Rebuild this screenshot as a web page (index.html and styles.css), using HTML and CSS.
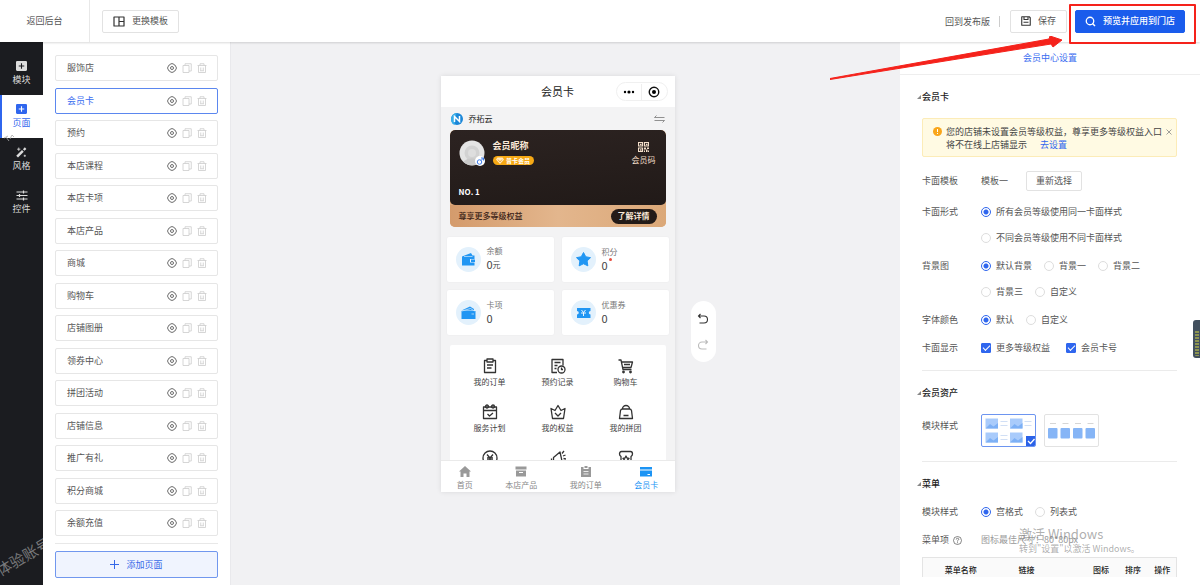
FILE: index.html
```html
<!DOCTYPE html>
<html lang="zh-CN">
<head>
<meta charset="utf-8">
<meta name="viewport" content="width=device-width, initial-scale=1">
<title>会员卡</title>
<link rel="stylesheet" href="styles.css">
</head>
<body>
<svg class="defs" aria-hidden="true">
  <symbol id="gear" viewBox="0 0 20 20"><path d="M7.4 1.5h5.2l1.2 2 2.6 1L19 10l-2.600 5.500-2.600 1-1.200 2H7.400l-1.200-2-2.600-1L1 10l2.600-5.500 2.600-1z" fill="none" stroke="currentColor" stroke-width="1.700" stroke-linejoin="round"/><circle cx="10" cy="10" r="3" fill="none" stroke="currentColor" stroke-width="1.700"/></symbol>
  <symbol id="copy" viewBox="0 0 20 20"><path d="M2 5h12v14H2zM6 5V1.500h12.500V16H14" fill="none" stroke="currentColor" stroke-width="1.600"/></symbol>
  <symbol id="trash" viewBox="0 0 20 20"><path d="M1 5h18M6 5V1.500h8V5M3 5v14h14V5M7.500 9v6M12.500 9v6M6 15.500h8" fill="none" stroke="currentColor" stroke-width="1.600"/></symbol>
  <symbol id="plusbox" viewBox="0 0 20 20"><path fill="currentColor" fill-rule="evenodd" d="M2 0h16a2 2 0 0 1 2 2v14a2 2 0 0 1-2 2H2a2 2 0 0 1-2-2V2a2 2 0 0 1 2-2zm7 4v4H5v2h4v4h2v-4h4V8h-4V4z"/></symbol>
</svg>
<header class="topbar">
  <a class="back" href="#">返回后台</a>
  <button class="btn swap"><svg width="12" height="11" viewBox="0 0 24 22"><path d="M2 2h20v18H2zM12 2v18M12 11h10" fill="none" stroke="#333" stroke-width="2.400" stroke-linejoin="round"/></svg>更换模板</button>
  <div class="actions">
    <a class="release" href="#">回到发布版</a>
    <button class="btn save"><svg width="10" height="10" viewBox="0 0 20 20"><path d="M1.500 1.500h15l2 2v15h-17zM6 2v5h8V2M5 12.500h10" fill="none" stroke="#333" stroke-width="2.200" stroke-linejoin="round"/></svg>保存</button>
    <button class="btn primary"><svg width="11" height="11" viewBox="0 0 22 22"><circle cx="10" cy="10" r="7.500" fill="none" stroke="#fff" stroke-width="2.600"/><path d="M15 15l5 5" stroke="#fff" stroke-width="3"/></svg>预览并应用到门店</button>
  </div>
</header>
<div class="workspace">
  <nav class="rail">
    <a href="#"><svg width="11" height="11"><use href="#plusbox"/></svg>模块</a>
    <a href="#" class="active"><svg width="11" height="11"><use href="#plusbox"/></svg>页面</a>
    <a href="#"><svg width="11" height="11" viewBox="0 0 20 20"><path d="M2 17.500L12.500 7" stroke="#ddd" stroke-width="4.500"/><path d="M14 5.500l3.500-3.500" stroke="#ddd" stroke-width="4"/><path d="M5 1v6M2 4h6M16 14v4M14 16h4" stroke="#ddd" stroke-width="1.500"/></svg>风格</a>
    <a href="#"><svg width="12" height="11" viewBox="0 0 24 20"><path d="M1 3h22M1 10h22M1 17h22M15 0v6M7 7v6M15 14v6" fill="none" stroke="#ddd" stroke-width="2.400"/></svg>控件</a>
  </nav>
  <aside class="pages">
    <ul class="page-list">
      <li><span>服饰店</span><button aria-label="设置"><svg><use href="#gear"/></svg></button><button class="dim" aria-label="复制"><svg><use href="#copy"/></svg></button><button class="dim" aria-label="删除"><svg><use href="#trash"/></svg></button></li>
      <li class="active"><span>会员卡</span><button aria-label="设置"><svg><use href="#gear"/></svg></button><button class="dim" aria-label="复制"><svg><use href="#copy"/></svg></button><button class="dim" aria-label="删除"><svg><use href="#trash"/></svg></button></li>
      <li><span>预约</span><button aria-label="设置"><svg><use href="#gear"/></svg></button><button class="dim" aria-label="复制"><svg><use href="#copy"/></svg></button><button class="dim" aria-label="删除"><svg><use href="#trash"/></svg></button></li>
      <li><span>本店课程</span><button aria-label="设置"><svg><use href="#gear"/></svg></button><button class="dim" aria-label="复制"><svg><use href="#copy"/></svg></button><button class="dim" aria-label="删除"><svg><use href="#trash"/></svg></button></li>
      <li><span>本店卡项</span><button aria-label="设置"><svg><use href="#gear"/></svg></button><button class="dim" aria-label="复制"><svg><use href="#copy"/></svg></button><button class="dim" aria-label="删除"><svg><use href="#trash"/></svg></button></li>
      <li><span>本店产品</span><button aria-label="设置"><svg><use href="#gear"/></svg></button><button class="dim" aria-label="复制"><svg><use href="#copy"/></svg></button><button class="dim" aria-label="删除"><svg><use href="#trash"/></svg></button></li>
      <li><span>商城</span><button aria-label="设置"><svg><use href="#gear"/></svg></button><button class="dim" aria-label="复制"><svg><use href="#copy"/></svg></button><button class="dim" aria-label="删除"><svg><use href="#trash"/></svg></button></li>
      <li><span>购物车</span><button aria-label="设置"><svg><use href="#gear"/></svg></button><button class="dim" aria-label="复制"><svg><use href="#copy"/></svg></button><button class="dim" aria-label="删除"><svg><use href="#trash"/></svg></button></li>
      <li><span>店铺图册</span><button aria-label="设置"><svg><use href="#gear"/></svg></button><button class="dim" aria-label="复制"><svg><use href="#copy"/></svg></button><button class="dim" aria-label="删除"><svg><use href="#trash"/></svg></button></li>
      <li><span>领券中心</span><button aria-label="设置"><svg><use href="#gear"/></svg></button><button class="dim" aria-label="复制"><svg><use href="#copy"/></svg></button><button class="dim" aria-label="删除"><svg><use href="#trash"/></svg></button></li>
      <li><span>拼团活动</span><button aria-label="设置"><svg><use href="#gear"/></svg></button><button class="dim" aria-label="复制"><svg><use href="#copy"/></svg></button><button class="dim" aria-label="删除"><svg><use href="#trash"/></svg></button></li>
      <li><span>店铺信息</span><button aria-label="设置"><svg><use href="#gear"/></svg></button><button class="dim" aria-label="复制"><svg><use href="#copy"/></svg></button><button class="dim" aria-label="删除"><svg><use href="#trash"/></svg></button></li>
      <li><span>推广有礼</span><button aria-label="设置"><svg><use href="#gear"/></svg></button><button class="dim" aria-label="复制"><svg><use href="#copy"/></svg></button><button class="dim" aria-label="删除"><svg><use href="#trash"/></svg></button></li>
      <li><span>积分商城</span><button aria-label="设置"><svg><use href="#gear"/></svg></button><button class="dim" aria-label="复制"><svg><use href="#copy"/></svg></button><button class="dim" aria-label="删除"><svg><use href="#trash"/></svg></button></li>
      <li><span>余额充值</span><button aria-label="设置"><svg><use href="#gear"/></svg></button><button class="dim" aria-label="复制"><svg><use href="#copy"/></svg></button><button class="dim" aria-label="删除"><svg><use href="#trash"/></svg></button></li>
    </ul>
    <div class="add-wrap"><button class="add"><svg width="9" height="9" viewBox="0 0 18 18"><path d="M9 0v18M0 9h18" stroke="currentColor" stroke-width="2"/></svg>添加页面</button></div>
  </aside>

  <main class="canvas">
    <section class="phone">
      <div class="phone-title">
        <h1>会员卡</h1>
        <div class="capsule">
          <svg width="12" height="6" viewBox="0 0 24 12"><circle cx="4" cy="6" r="2.400"/><circle cx="12" cy="6" r="3.200"/><circle cx="20" cy="6" r="2.400"/></svg>
          <i></i>
          <svg width="12" height="12" viewBox="0 0 24 24"><circle cx="12" cy="12" r="9.500" fill="none" stroke="#111" stroke-width="2.800"/><circle cx="12" cy="12" r="4"/></svg>
        </div>
      </div>
      <div class="shop">
        <svg width="12" height="12" viewBox="0 0 24 24"><circle cx="12" cy="12" r="12" fill="#1b87d8"/><path d="M1 8a12 12 0 0 1 10-8l-4 24A12 12 0 0 1 1 8z" fill="#39aee8"/><path d="M7 18V7l10 10V6" fill="none" stroke="#fff" stroke-width="3"/></svg>
        <span>乔拓云</span>
        <svg width="11" height="8" viewBox="0 0 22 16"><path d="M5 1L1 5h20M17 15l4-4H1" fill="none" stroke="#777" stroke-width="1.600"/></svg>
      </div>
      <div class="member">
        <div class="member-main">
          <svg class="avatar" width="27" height="27" viewBox="0 0 54 54"><circle cx="26" cy="26" r="25" fill="#e4e4e4"/><circle cx="26" cy="26" r="15" fill="#d2d2d2"/><circle cx="26" cy="26" r="8" fill="#dedede"/><path d="M8 43q18-13 36 0a25 25 0 0 1-36 0z" fill="#c9c9c9"/><circle cx="42" cy="42" r="10" fill="#fff"/><circle cx="41" cy="44" r="4.500" fill="none" stroke="#3b7bea" stroke-width="2"/><path d="M44 41l5-5m-5 0h5v5" fill="none" stroke="#3b7bea" stroke-width="2"/></svg>
          <div class="who"><b>会员昵称</b><span class="level"><svg width="8" height="7" viewBox="0 0 16 14"><path d="M3 1h10l3 4-8 9-8-9z" fill="#ffe9c0"/><path d="M4 5l4 5 4-5" fill="none" stroke="#f39c12" stroke-width="1.600"/></svg>普卡会员</span></div>
          <div class="code"><svg width="11" height="10" viewBox="0 0 22 20"><path d="M1 1h8v7H1zM13 1h8v7h-8zM1 12h8v7H1z" fill="none" stroke="#f3dfca" stroke-width="2.400"/><path d="M4 3.500h3v3H4zM16 3.500h3v3h-3zM4 14.500h3v3H4zM12 11h4v4h-4zM18 11h4v3h-4zM16 15h3v5h-3zM12 17h2v3h-2zM20 17h2v3h-2z" fill="#f3dfca"/></svg>会员码</div>
          <b class="no">NO. 1</b>
        </div>
        <div class="member-more"><span>尊享更多等级权益</span><button>了解详情</button></div>
      </div>
      <div class="assets">
        <div><svg width="25" height="25" viewBox="0 0 50 50"><circle cx="25" cy="25" r="25" fill="#e3f1fc"/><path d="M12 19l18-7 3 5h4v7h-9v7h9v6H12z" fill="#2196f3"/><path d="M30 25h8v5h-8z" fill="#2196f3"/><path d="M16 19h17" stroke="#bfe0fb" stroke-width="1.500"/></svg><p>余额<strong>0<small>元</small></strong></p></div>
        <div><svg width="25" height="25" viewBox="0 0 50 50"><circle cx="25" cy="25" r="25" fill="#e3f1fc"/><path d="M25 11l4.500 8.500 9.500 1.800-6.800 6.700 1.500 9.700-8.700-4.200-8.700 4.200 1.500-9.700L11 21.300l9.500-1.800z" fill="#2196f3" stroke="#2196f3" stroke-width="2" stroke-linejoin="round"/></svg><p>积分<strong>0<em></em></strong></p></div>
        <div><svg width="25" height="25" viewBox="0 0 50 50"><circle cx="25" cy="25" r="25" fill="#e3f1fc"/><path d="M11 21l17-8 8 5v3z" fill="#2196f3"/><path d="M11 22h28v16H11z" fill="#2196f3"/><path d="M12 22l17-5 8 5M31 28h5" fill="none" stroke="#cce7fc" stroke-width="1.500"/></svg><p>卡项<strong>0</strong></p></div>
        <div><svg width="25" height="25" viewBox="0 0 50 50"><circle cx="25" cy="25" r="25" fill="#e3f1fc"/><path d="M12 16h27v6a3 3 0 0 0 0 7v7H12v-7a3 3 0 0 0 0-7z" fill="#2196f3"/><path d="M21 20l4 5 4-5M25 25v7M20 26h10" fill="none" stroke="#fff" stroke-width="1.800"/></svg><p>优惠券<strong>0</strong></p></div>
      </div>
      <div class="menu-clip">
      <div class="menu">
        <a href="#"><svg viewBox="0 0 32 32"><path d="M10 5H5v24h22V5h-5M10 2h12v6H10zM10 14h12M10 20h9"/></svg>我的订单</a>
        <a href="#"><svg viewBox="0 0 32 32"><path d="M14 29H4V3h22v12M9 9h12M9 15h6M9 21h4"/><circle cx="23" cy="23" r="7"/><path d="M23 19v4h3"/></svg>预约记录</a>
        <a href="#"><svg viewBox="0 0 32 32"><path d="M1 4h5l4 19h17M7 8h22l-3 11H10M12 13h12"/><circle cx="11" cy="28" r="1.500"/><circle cx="25" cy="28" r="1.500"/></svg>购物车</a>
        <a href="#"><svg viewBox="0 0 32 32"><path d="M3 6h26v23H3zM3 13h26M11 20l4 4 7-6"/><circle cx="10" cy="5" r="3"/><circle cx="22" cy="5" r="3"/></svg>服务计划</a>
        <a href="#"><svg viewBox="0 0 32 32"><path d="M2 9l8 4 6-10 6 10 8-4-3 20H5zM10 18l6 6 6-6"/></svg>我的权益</a>
        <a href="#"><svg viewBox="0 0 32 32"><path d="M3 29h26l-2-16q-1-3-4-3H9q-3 0-4 3zM9 10a7 7 0 0 1 14 0M11 23h10"/></svg>我的拼团</a>
        <a href="#" aria-label="分销"><svg viewBox="0 0 32 32"><circle cx="16" cy="16" r="14"/><path d="M10 9l6 7 6-7M16 16v9M10 16h12M10 20h12"/></svg></a>
        <a href="#" aria-label="活动"><svg viewBox="0 0 32 32"><path d="M7 15L20 4l4 18-17 1zM3 17v6M10 23l2 6h4M24 7l4-5M26 12l5-2M27 17l5 1"/></svg></a>
        <a href="#" aria-label="门店"><svg viewBox="0 0 32 32"><path d="M7 3h18q4 0 4 5 0 3-3 5v16H6V13q-3-2-3-5 0-5 4-5zM16 12l2 4 4 1-3 3 1 4-4-2-4 2 1-4-3-3 4-1z"/></svg></a>
      </div>
      </div>
      <nav class="tabs">
        <a href="#"><svg viewBox="0 0 24 22"><path d="M12 0l12 11h-3v11h-6v-7H9v7H3V11H0z"/></svg>首页</a>
        <a href="#"><svg viewBox="0 0 24 22"><path d="M1 1h22v6H1zM2 9h20v12H2z"/><path d="M8 13h8" stroke="#fff" stroke-width="2"/></svg>本店产品</a>
        <a href="#"><svg viewBox="0 0 24 22"><path d="M2 2h5v4h10V2h5v20H2zM9 0h6v4H9z"/><path d="M7 11h10M7 16h10" stroke="#fff" stroke-width="1.600"/></svg>我的订单</a>
        <a href="#" class="active"><svg viewBox="0 0 24 22"><path d="M0 2h24v5H0zM0 9h24v12H0z"/><path d="M15 17h5" stroke="#fff" stroke-width="2"/></svg>会员卡</a>
      </nav>
    </section>
    <div class="history">
      <button aria-label="撤销"><svg width="12" height="12" viewBox="0 0 24 24"><path d="M7 2L3 6l4 4M3 6h11a7 7 0 0 1 0 14H5" fill="none" stroke="#333" stroke-width="2.200"/></svg></button>
      <button aria-label="重做"><svg width="12" height="12" viewBox="0 0 24 24"><path d="M17 2l4 4-4 4M21 6H10a7 7 0 0 0 0 14h9" fill="none" stroke="#bbb" stroke-width="2.200"/></svg></button>
    </div>
  </main>

  <aside class="settings">
    <div class="settings-tab"><a href="#">会员中心设置</a></div>
    <div class="settings-body">
      <section>
        <h2>会员卡</h2>
        <div class="notice"><svg width="9" height="9" viewBox="0 0 18 18"><circle cx="9" cy="9" r="9" fill="#f9a51a"/><path d="M9 4v6M9 12v2" stroke="#fff" stroke-width="2"/></svg><p>您的店铺未设置会员等级权益，尊享更多等级权益入口<br>将不在线上店铺显示<a href="#">去设置</a></p><button aria-label="关闭"><svg width="6" height="6" viewBox="0 0 12 12"><path d="M1 1l10 10M11 1L1 11" stroke="#888" stroke-width="1.600"/></svg></button></div>
        <div class="form">
          <div class="row template"><span>卡面模板</span><div class="opts"><span class="current">模板一</span><button class="btn choose">重新选择</button></div></div>
          <div class="row"><span>卡面形式</span><div class="opts"><label><input type="radio" name="form" checked>所有会员等级使用同一卡面样式</label><label><input type="radio" name="form">不同会员等级使用不同卡面样式</label></div></div>
          <div class="row"><span>背景图</span><div class="opts"><label><input type="radio" name="bg" checked>默认背景</label><label><input type="radio" name="bg">背景一</label><label><input type="radio" name="bg">背景二</label><label><input type="radio" name="bg">背景三</label><label><input type="radio" name="bg">自定义</label></div></div>
          <div class="row"><span>字体颜色</span><div class="opts"><label><input type="radio" name="color" checked>默认</label><label><input type="radio" name="color">自定义</label></div></div>
          <div class="row"><span>卡面显示</span><div class="opts checks"><label><input type="checkbox" checked>更多等级权益</label><label><input type="checkbox" checked>会员卡号</label></div></div>
        </div>
      </section>
      <section>
        <h2>会员资产</h2>
        <div class="row thumbs"><span>模块样式</span><div class="opts">
          <button class="thumb active" aria-label="样式一"><svg viewBox="0 0 110 66"><g fill="#a9cbfb"><path d="M9 9h25v20H9zM58 9h25v20H58zM9 37h25v20H9zM58 37h25v20H58z"/></g><g fill="#7db0f5"><path d="M9 29l9-9 7 5 9-7v11zM58 29l9-9 7 5 9-7v11zM9 57l9-9 7 5 9-7v11zM58 57l9-9 7 5 9-7v11z"/></g><path d="M39 15h14M39 23h14M87 15h14M87 23h14M39 43h14M39 51h14" stroke="#c5d7f2" stroke-width="1.600"/><path d="M90 44h20v22H90z" fill="#2b62e8"/><path d="M94 54l5 5 8-9" fill="none" stroke="#fff" stroke-width="2.600"/></svg></button>
          <button class="thumb" aria-label="样式二"><svg viewBox="0 0 110 66"><path d="M12 19h12M37 19h12M62 19h12M87 19h12" stroke="#ccc" stroke-width="1.600"/><g fill="#86b5f6"><rect x="8" y="28" width="19" height="21" rx="2"/><rect x="33" y="28" width="19" height="21" rx="2"/><rect x="58" y="28" width="19" height="21" rx="2"/><rect x="83" y="28" width="19" height="21" rx="2"/></g></svg></button>
        </div></div>
      </section>
      <section>
        <h2>菜单</h2>
        <div class="form">
          <div class="row"><span>模块样式</span><div class="opts"><label><input type="radio" name="menu" checked>宫格式</label><label><input type="radio" name="menu">列表式</label></div></div>
          <div class="row"><span class="help">菜单项<svg width="9" height="9" viewBox="0 0 18 18"><circle cx="9" cy="9" r="8" fill="none" stroke="#555" stroke-width="1.400"/><path d="M6.500 7q0-2.500 2.500-2.500T11.500 7Q11.500 8 9 9.500V11M9 12.500v2" fill="none" stroke="#555" stroke-width="1.500"/></svg></span><div class="opts hint">图标最佳尺寸：80*80px</div></div>
        </div>
        <table><thead><tr><th class="c-name">菜单名称</th><th class="c-link">链接</th><th class="c-icon">图标</th><th class="c-sort">排序</th><th>操作</th></tr></thead></table>
      </section>
    </div>
  </aside>
</div>
<div class="account-mark"><svg width="12" height="8" viewBox="0 0 12 8"><path d="M1 4l4-2M3 3l3 4M7 5l2-4 2 2" fill="none" stroke="#aaa" stroke-width=".8"/></svg><span>体验账号</span></div>
<div class="os-mark"><p>激活 Windows</p><small>转到"设置"以激活 Windows。</small></div>
<div class="meter"></div>
<div class="focus-box"></div>
<svg class="arrow" width="232" height="44" viewBox="0 0 232 44"><path d="M0 42.500L219 3l1-3 12 4-9 7-2-3L0 43.500z" fill="#f5221b" stroke="#f5221b" stroke-width="1" stroke-linejoin="round"/></svg>
</body>
</html>
```
FILE: styles.css
```css
* { box-sizing: border-box; }
body {
  margin: 0;
  height: 100vh;
  display: flex;
  flex-direction: column;
  overflow: hidden;
  position: relative;
  font: 9px/16px "Noto Sans CJK SC", sans-serif;
  color: #555;
  background: #fff;
}
button { font: inherit; color: inherit; border: 0; padding: 0; background: none; display: flex; align-items: center; justify-content: center; }
a { color: inherit; text-decoration: none; }
h1, h2, p, ul { margin: 0; padding: 0; }
svg { display: block; flex: none; }
.defs { position: absolute; width: 0; height: 0; }

.topbar { height: 42px; flex: none; display: flex; align-items: center; background: #fff; box-shadow: 0 1px 2px rgba(0,0,0,.15); z-index: 1; }
.back { width: 90px; line-height: 42px; text-align: center; border-right: 1px solid #e8e8e8; }
.btn { height: 23px; border: 1px solid #e2e2e2; border-radius: 2px; background: #fff; }
.swap { margin-left: 12px; padding: 0 10px; gap: 7px; }
.actions { margin-left: auto; padding-right: 15px; display: flex; align-items: center; }
.release { padding-right: 9px; line-height: 11px; border-right: 1px solid #ccc; margin-right: 10px; }
.save { width: 57px; gap: 7px; margin-right: 8px; }
.primary { width: 110px; gap: 7px; background: #1a5cec; border-color: #1a5cec; color: #fff; font-weight: 500; }

.workspace { flex: 1; min-height: 0; display: flex; }
.rail { width: 43px; background: #1b1c20; color: #ddd; padding-top: 10px; }
.rail a { height: 43px; display: flex; flex-direction: column; align-items: center; padding-top: 9px; }
.rail .active { background: #fff; color: #2f66ee; border-left: 2px solid #2f66ee; padding-right: 2px; }
.pages { width: 187px; padding: 13px 12px 7px; display: flex; flex-direction: column; }
.page-list { flex: 1; list-style: none; display: flex; flex-direction: column; justify-content: space-between; }
.page-list li { height: 26px; border: 1px solid #e6e6e6; border-radius: 2px; display: flex; align-items: center; gap: 5px; padding: 0 10px 0 11px; }
.page-list span { flex: 1; }
.page-list svg { width: 10px; height: 10px; }
.page-list .active { border-color: #5b87ef; }
.page-list .active span { color: #3a6df0; }
.page-list .dim { color: #ccc; }
.add-wrap { margin-top: 7px; padding-top: 7px; border-top: 1px solid #e8e8e8; }
.add { width: 100%; height: 27px; gap: 7px; color: #3568e8; background: #f0f4fe; border: 1px solid #7197ee; border-radius: 2px; }

.canvas { flex: 1; background: #f1f1f3; display: grid; grid-template-columns: 1fr auto 1fr; padding: 34px 16px 0 0; align-items: start; border-left: 1px solid #e9e9ec; }
.phone { grid-column: 2; width: 234px; height: 416px; background: #f3f3f4; display: flex; flex-direction: column; box-shadow: 0 0 5px rgba(0,0,0,.1); font-size: 8px; }
.phone-title { height: 31px; flex: none; background: #fff; display: grid; grid-template-columns: 1fr auto 1fr; align-items: center; }
.phone-title h1 { grid-column: 2; font-size: 11px; line-height: 14px; padding-bottom: 2px; font-weight: 400; color: #222; }
.capsule { justify-self: end; margin-right: 7px; width: 52px; height: 19px; border: 1px solid #f0f0f0; border-radius: 10px; display: flex; align-items: center; justify-content: space-evenly; }
.capsule i { width: 1px; height: 16px; background: #eee; }
.shop { height: 23px; flex: none; padding: 0 10px; display: flex; align-items: center; gap: 6px; color: #222; }
.shop span { flex: 1; }
.member { margin: 0 9px; flex: none; border-radius: 5px; overflow: hidden; background: #ddab7f; }
.member-main { height: 75px; border-radius: 5px; background: linear-gradient(175deg, #2c2321, #211a18); color: #f3dfca; display: grid; grid-template: 1fr auto / auto 1fr auto; column-gap: 7px; padding: 8px 10px 5px 9px; }
.avatar { margin-top: 2px; }
.who b { display: block; font-size: 9px; color: #fbe9d8; }
.level { display: flex; width: 41px; height: 9px; border-radius: 5px; background: #f6a915; color: #fff; align-items: center; justify-content: center; gap: 2px; font-size: 6px; font-weight: 700; margin-top: 2px; }
.code { display: flex; flex-direction: column; align-items: center; padding-top: 4px; }
.no { grid-column: 1 / -1; line-height: 16px; color: #fff; }
.member-more { height: 22px; display: flex; align-items: center; justify-content: space-between; padding: 0 9px; color: #3b2418; font-weight: 500; background: linear-gradient(90deg, #d49b6c, #e3b68d, #dba878); }
.member-more button { width: 46px; height: 15px; border-radius: 8px; background: #231b18; color: #fbe9d8; font-weight: 700; }
.assets { flex: none; display: grid; grid-template-columns: 1fr 1fr; gap: 8px; padding: 10px 6px; }
.assets div { height: 45px; border-radius: 2px; background: #fff; display: flex; align-items: center; gap: 6px; padding-left: 9px; box-shadow: 0 0 2px rgba(0,0,0,.05); }
.assets p { color: #777; line-height: 12px; padding-bottom: 2px; }
.assets strong { display: flex; font-size: 11px; line-height: 14px; font-weight: 400; color: #444; }
.assets small { font-size: 8px; line-height: 16px; }
.assets em { width: 3px; height: 3px; border-radius: 50%; background: #e74c3c; margin-left: 1px; }
.menu-clip { flex: 1; min-height: 0; overflow: hidden; padding: 0 9px; }
.menu { background: #fff; border-radius: 2px; display: grid; grid-template-columns: repeat(3, 1fr); padding: 13px 6px 0; color: #444; }
.menu a { height: 46px; display: flex; flex-direction: column; align-items: center; }
.menu svg { width: 16px; height: 16px; fill: none; stroke: #333; stroke-width: 2.6; stroke-linejoin: round; }
.tabs { height: 32px; flex: none; background: #fff; border-top: 1px solid #eaeaea; display: flex; justify-content: space-around; color: #888; }
.tabs a { display: flex; flex-direction: column; align-items: center; padding-top: 5px; }
.tabs svg { width: 12px; height: 11px; fill: #999; }
.tabs .active { color: #1c94f4; }
.tabs .active svg { fill: #1c94f4; }
.history { margin: 225px 0 0 16px; width: 25px; height: 61px; border-radius: 13px; background: #fff; display: flex; flex-direction: column; align-items: center; justify-content: center; gap: 14px; }

.settings { width: 300px; display: flex; flex-direction: column; padding-bottom: 8px; }
.settings-tab { height: 33px; flex: none; line-height: 32px; text-align: center; color: #3a6df0; border-bottom: 1px solid #eee; }
.settings-body { flex: 1; min-height: 0; overflow: hidden; padding: 0 23px 0 22px; }
.settings section { padding: 14px 0; border-bottom: 1px solid #ebebeb; }
.settings section:last-child { border: 0; }
h2 { font-size: 9px; line-height: 16px; font-weight: 500; color: #222; display: flex; align-items: center; margin-left: -5px; gap: 1px; }
h2::before { content: ""; border-left: 4px solid transparent; border-bottom: 4px solid #888; }
.notice { margin: 13px 0 14px; height: 39px; background: #fffae3; border: 1px solid #fcecb8; border-radius: 2px; display: flex; align-items: flex-start; padding: 6px 9px 0 10px; gap: 4px; line-height: 13px; color: #444; }
.notice svg { margin-top: 2px; }
.notice p { flex: 1; white-space: nowrap; }
.notice a { color: #2f66ee; margin-left: 13px; }
.notice button { margin-top: 2px; }
.form { display: flex; flex-direction: column; gap: 12px; }
.row { display: grid; grid-template-columns: 59px 1fr; }
.opts { display: flex; flex-wrap: wrap; gap: 10px 12px; }
.opts label { display: flex; align-items: center; gap: 5px; }
.checks { column-gap: 16px; }
.template { align-items: center; padding-bottom: 1px; }
.template .opts { align-items: center; gap: 18px; }
.choose { width: 56px; height: 20px; }
input { appearance: none; margin: 0; width: 10px; height: 10px; border: 1px solid #ddd; background: #fff; }
input[type=radio] { border-radius: 50%; }
input[type=radio]:checked { border-color: #2f66ee; background: radial-gradient(circle, #2f66ee 0 2px, #fff 3px); }
input[type=checkbox] { border-radius: 1px; border-color: #2f66ee; background: #2f66ee; display: grid; place-items: center; }
input[type=checkbox]::after { content: ""; width: 6px; height: 3px; border: solid #fff; border-width: 0 0 1px 1px; transform: translateY(-1px) rotate(-45deg); }
.thumbs { padding-top: 13px; line-height: 24px; }
.thumbs .opts { gap: 8px; }
.thumb { width: 55px; height: 33px; border: 1px solid #e2e2e2; border-radius: 2px; overflow: hidden; }
.thumb svg { width: 55px; height: 33px; }
.thumb.active { border-color: #6d95f0; }
section:last-child h2 { margin-bottom: 12px; }
.help { display: flex; align-items: center; gap: 4px; }
.hint { color: #999; }
table { width: 100%; margin-top: 9px; border: 1px solid #e4e4e4; border-collapse: collapse; background: #fafafa; table-layout: fixed; }
th { font-size: 8px; line-height: 16px; font-weight: 500; color: #222; padding: 4px 0 6px; text-align: center; }
.c-name { width: 76px; }
.c-link { width: 56px; }
.c-icon { width: 63px; padding-left: 30px; }
.c-sort { width: 31px; }

.account-mark { position: absolute; left: 0; bottom: 0; width: 43px; height: 451px; overflow: hidden; display: flex; flex-direction: column; justify-content: space-between; pointer-events: none; }
.account-mark svg { margin-left: 3px; }
.account-mark span { font-size: 15px; line-height: 18px; white-space: nowrap; color: #77787a; transform: rotate(-30deg); transform-origin: 0 100%; margin: 0 0 6px 2px; }
.os-mark { position: absolute; right: 54px; bottom: 29px; width: 127px; color: rgba(130,130,130,.65); white-space: nowrap; pointer-events: none; }
.os-mark p { font-size: 13px; line-height: 16px; }
.os-mark small { display: block; font-size: 9px; line-height: 14px; }
.meter { position: absolute; right: 0; top: 320px; width: 7px; height: 38px; border-radius: 3px 0 0 3px; border: 2px solid #42505e; background: repeating-linear-gradient(#8d9450 0 2px, #42505e 2px 3px); border-top-width: 11px; border-right-width: 1px; }
.focus-box { position: absolute; right: 4px; top: 4px; width: 127px; height: 40px; border: 2px solid #f5221b; border-radius: 1px; z-index: 2; }
.arrow { position: absolute; right: 138px; top: 36px; z-index: 2; }
```
